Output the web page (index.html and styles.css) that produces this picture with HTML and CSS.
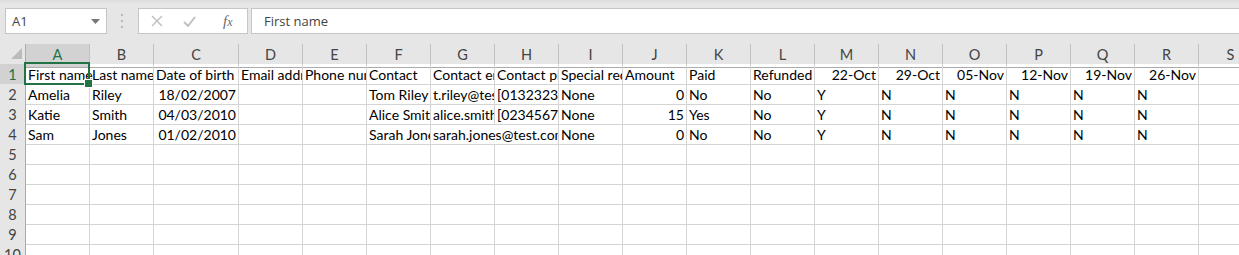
FILE: index.html
```html
<!DOCTYPE html>
<html lang="en">
<head>
  <meta charset="UTF-8" />
  <title>Book1 - Excel</title>
  <link rel="stylesheet" href="styles.css">
</head>
<body>

  <div class="formula-bar">
    <div class="name-box">
      <span>A1</span>
      <svg class="drop" width="9" height="5" viewBox="0 0 9 5"><polygon points="0,0 9,0 4.5,5" fill="#777"/></svg>
    </div>
    <div class="grip">
      <svg width="3" height="14" viewBox="0 0 3 14"><rect x="0" y="0" width="2" height="2" fill="#b9b9b9"/><rect x="0" y="6" width="2" height="2" fill="#b9b9b9"/><rect x="0" y="12" width="2" height="2" fill="#b9b9b9"/></svg>
    </div>
    <div class="fn-box">
      <svg class="btn" width="12" height="12" viewBox="0 0 12 12"><path d="M1 1 L11 11 M11 1 L1 11" stroke="#bdbdbd" stroke-width="1.4" fill="none"/></svg>
      <svg class="btn" width="13" height="11" viewBox="0 0 13 11"><path d="M1 6 L5 10 L12 1" stroke="#bdbdbd" stroke-width="1.8" fill="none"/></svg>
      <span class="fx">f<i>x</i></span>
    </div>
    <div class="formula-input">First name</div>
  </div>

  <div class="sheet">
    <div class="row head">
      <div class="corner">
        <svg width="25" height="19" viewBox="0 0 25 19"><polygon points="11,15 22,15 22,4" fill="#bcbcbc"/></svg>
      </div>
      <div class="col-head selected">A</div>
      <div class="col-head">B</div>
      <div class="col-head">C</div>
      <div class="col-head">D</div>
      <div class="col-head">E</div>
      <div class="col-head">F</div>
      <div class="col-head">G</div>
      <div class="col-head">H</div>
      <div class="col-head">I</div>
      <div class="col-head">J</div>
      <div class="col-head">K</div>
      <div class="col-head">L</div>
      <div class="col-head">M</div>
      <div class="col-head">N</div>
      <div class="col-head">O</div>
      <div class="col-head">P</div>
      <div class="col-head">Q</div>
      <div class="col-head">R</div>
      <div class="col-head">S</div>
    </div>

    <div class="row">
      <div class="row-head selected">1</div>
      <div class="cell active">First name</div>
      <div class="cell">Last name</div>
      <div class="cell">Date of birth</div>
      <div class="cell">Email address</div>
      <div class="cell">Phone number</div>
      <div class="cell">Contact</div>
      <div class="cell">Contact email</div>
      <div class="cell">Contact phone</div>
      <div class="cell">Special requirements</div>
      <div class="cell">Amount</div>
      <div class="cell">Paid</div>
      <div class="cell">Refunded</div>
      <div class="cell num">22-Oct</div>
      <div class="cell num">29-Oct</div>
      <div class="cell num">05-Nov</div>
      <div class="cell num">12-Nov</div>
      <div class="cell num">19-Nov</div>
      <div class="cell num">26-Nov</div>
      <div class="cell"></div>
    </div>

    <div class="row">
      <div class="row-head">2</div>
      <div class="cell">Amelia</div>
      <div class="cell">Riley</div>
      <div class="cell num">18/02/2007</div>
      <div class="cell"></div>
      <div class="cell"></div>
      <div class="cell">Tom Riley</div>
      <div class="cell">t.riley@test.com</div>
      <div class="cell">[01323234567]</div>
      <div class="cell">None</div>
      <div class="cell num">0</div>
      <div class="cell">No</div>
      <div class="cell">No</div>
      <div class="cell">Y</div>
      <div class="cell">N</div>
      <div class="cell">N</div>
      <div class="cell">N</div>
      <div class="cell">N</div>
      <div class="cell">N</div>
      <div class="cell"></div>
    </div>

    <div class="row">
      <div class="row-head">3</div>
      <div class="cell">Katie</div>
      <div class="cell">Smith</div>
      <div class="cell num">04/03/2010</div>
      <div class="cell"></div>
      <div class="cell"></div>
      <div class="cell">Alice Smith</div>
      <div class="cell">alice.smith@test.com</div>
      <div class="cell">[02345678901]</div>
      <div class="cell">None</div>
      <div class="cell num">15</div>
      <div class="cell">Yes</div>
      <div class="cell">No</div>
      <div class="cell">Y</div>
      <div class="cell">N</div>
      <div class="cell">N</div>
      <div class="cell">N</div>
      <div class="cell">N</div>
      <div class="cell">N</div>
      <div class="cell"></div>
    </div>

    <div class="row">
      <div class="row-head">4</div>
      <div class="cell">Sam</div>
      <div class="cell">Jones</div>
      <div class="cell num">01/02/2010</div>
      <div class="cell"></div>
      <div class="cell"></div>
      <div class="cell">Sarah Jones</div>
      <div class="cell span2">sarah.jones@test.com</div>
      <div class="cell">None</div>
      <div class="cell num">0</div>
      <div class="cell">No</div>
      <div class="cell">No</div>
      <div class="cell">Y</div>
      <div class="cell">N</div>
      <div class="cell">N</div>
      <div class="cell">N</div>
      <div class="cell">N</div>
      <div class="cell">N</div>
      <div class="cell"></div>
    </div>

    <div class="row">
      <div class="row-head">5</div>
      <div class="cell"></div><div class="cell"></div><div class="cell"></div><div class="cell"></div><div class="cell"></div>
      <div class="cell"></div><div class="cell"></div><div class="cell"></div><div class="cell"></div><div class="cell"></div>
      <div class="cell"></div><div class="cell"></div><div class="cell"></div><div class="cell"></div><div class="cell"></div>
      <div class="cell"></div><div class="cell"></div><div class="cell"></div><div class="cell"></div>
    </div>
    <div class="row">
      <div class="row-head">6</div>
      <div class="cell"></div><div class="cell"></div><div class="cell"></div><div class="cell"></div><div class="cell"></div>
      <div class="cell"></div><div class="cell"></div><div class="cell"></div><div class="cell"></div><div class="cell"></div>
      <div class="cell"></div><div class="cell"></div><div class="cell"></div><div class="cell"></div><div class="cell"></div>
      <div class="cell"></div><div class="cell"></div><div class="cell"></div><div class="cell"></div>
    </div>
    <div class="row">
      <div class="row-head">7</div>
      <div class="cell"></div><div class="cell"></div><div class="cell"></div><div class="cell"></div><div class="cell"></div>
      <div class="cell"></div><div class="cell"></div><div class="cell"></div><div class="cell"></div><div class="cell"></div>
      <div class="cell"></div><div class="cell"></div><div class="cell"></div><div class="cell"></div><div class="cell"></div>
      <div class="cell"></div><div class="cell"></div><div class="cell"></div><div class="cell"></div>
    </div>
    <div class="row">
      <div class="row-head">8</div>
      <div class="cell"></div><div class="cell"></div><div class="cell"></div><div class="cell"></div><div class="cell"></div>
      <div class="cell"></div><div class="cell"></div><div class="cell"></div><div class="cell"></div><div class="cell"></div>
      <div class="cell"></div><div class="cell"></div><div class="cell"></div><div class="cell"></div><div class="cell"></div>
      <div class="cell"></div><div class="cell"></div><div class="cell"></div><div class="cell"></div>
    </div>
    <div class="row">
      <div class="row-head">9</div>
      <div class="cell"></div><div class="cell"></div><div class="cell"></div><div class="cell"></div><div class="cell"></div>
      <div class="cell"></div><div class="cell"></div><div class="cell"></div><div class="cell"></div><div class="cell"></div>
      <div class="cell"></div><div class="cell"></div><div class="cell"></div><div class="cell"></div><div class="cell"></div>
      <div class="cell"></div><div class="cell"></div><div class="cell"></div><div class="cell"></div>
    </div>
    <div class="row">
      <div class="row-head">10</div>
      <div class="cell"></div><div class="cell"></div><div class="cell"></div><div class="cell"></div><div class="cell"></div>
      <div class="cell"></div><div class="cell"></div><div class="cell"></div><div class="cell"></div><div class="cell"></div>
      <div class="cell"></div><div class="cell"></div><div class="cell"></div><div class="cell"></div><div class="cell"></div>
      <div class="cell"></div><div class="cell"></div><div class="cell"></div><div class="cell"></div>
    </div>
  </div>

</body>
</html>
```

FILE: styles.css
```css
* {
  box-sizing: border-box;
  margin: 0;
  padding: 0;
}

body {
  background: #e6e6e6;
  width: 1239px;
  height: 255px;
  overflow: hidden;
  font-family: 'Lato', 'Liberation Sans', sans-serif;
}

/* formula bar */

.formula-bar {
  height: 44px;
  padding: 8px 0 10px 5px;
  display: flex;
  align-items: stretch;
  background: linear-gradient(#dcdcdc, #e6e6e6 4px);
  font-family: 'Open Sans', 'Liberation Sans', sans-serif;
  font-size: 13px;
  color: #444;
}

.name-box {
  width: 102px;
  background: #fff;
  border: 1px solid #c6c6c6;
  display: flex;
  align-items: center;
  justify-content: space-between;
  padding: 0 6px 0 6px;
}

.grip {
  width: 31px;
  display: flex;
  align-items: center;
  justify-content: center;
}

.fn-box {
  width: 110px;
  background: #fff;
  border: 1px solid #c6c6c6;
  display: flex;
  align-items: center;
  padding-left: 12px;
  gap: 20px;
}

.fx {
  font-family: 'Liberation Serif', serif;
  font-style: italic;
  font-size: 15px;
  color: #6a6a6a;
  margin-left: 7px;
}

.fx i {
  font-size: 12px;
}

.formula-input {
  flex: 1;
  margin-left: 3px;
  background: #fff;
  border: 1px solid #c6c6c6;
  border-right: none;
  display: flex;
  align-items: center;
  padding-left: 12px;
}

/* sheet grid */

.sheet {
  background: #fff;
  height: 211px;
  overflow: hidden;
}

.row {
  display: grid;
  grid-template-columns: 26px 64px 64px 85px repeat(16, 64px);
  height: 20px;
  font-size: 14px;
  line-height: 19px;
  color: #000;
}

.cell {
  border-right: 1px solid #d4d4d4;
  border-bottom: 1px solid #d4d4d4;
  padding: 1px 2px 0 2px;
  white-space: nowrap;
  overflow: hidden;
}

.cell.num {
  text-align: right;
  padding-right: 2px;
}

.cell.span2 {
  grid-column: span 2;
}

.cell.active {
  position: relative;
  overflow: visible;
  clip-path: inset(-3px -5px -5px -3px);
}

.cell.active::before {
  content: '';
  position: absolute;
  left: -2px;
  top: -2px;
  right: -1px;
  bottom: -1px;
  border: 2px solid #217346;
}

.cell.active::after {
  content: '';
  position: absolute;
  right: -4px;
  bottom: -4px;
  width: 7px;
  height: 7px;
  background: #217346;
  border: 1px solid #fff;
}

.head {
  background: #e6e6e6;
  font-size: 14.5px;
}

.corner {
  background: #e6e6e6;
  border-right: 1px solid #ababab;
  border-bottom: 1px solid #ababab;
}

.col-head {
  text-align: center;
  color: #444;
  border-right: 1px solid #c0c0c0;
  border-bottom: 1px solid #ababab;
  padding-top: 1px;
}

.col-head.selected {
  background: #d2d2d2;
  color: #217346;
}

.row-head {
  background: #e6e6e6;
  text-align: center;
  color: #444;
  font-size: 14.5px;
  border-right: 1px solid #ababab;
  border-bottom: 1px solid #c6c6c6;
  padding-top: 1px;
}

.row-head.selected {
  color: #217346;
  background: #d2d2d2;
}
```
